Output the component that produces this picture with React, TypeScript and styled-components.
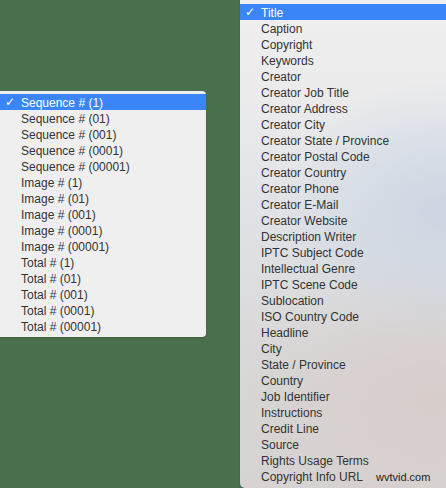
import React from 'react';
import styled, { createGlobalStyle } from 'styled-components';

const GlobalStyle = createGlobalStyle`
  html, body {
    margin: 0;
    padding: 0;
    background: #4a6f4d;
  }
  body {
    font-family: "Liberation Sans", Arial, sans-serif;
  }
`;

const Stage = styled.div`
  position: relative;
  width: 446px;
  height: 488px;
  overflow: hidden;
  display: flex;
  align-items: flex-start;
  gap: 34px;
  background: #4a6f4d;
`;

const Menu = styled.ul<{ $tall?: boolean }>`
  list-style: none;
  margin: ${(p) => (p.$tall ? '0' : '91px 0 0')};
  padding: ${(p) => (p.$tall ? '4px 0 4px' : '3px 0 3px')};
  width: 206px;
  flex-shrink: 0;
  border-radius: ${(p) => (p.$tall ? '0 0 0 5px' : '0 4px 4px 0')};
  background: ${(p) =>
    p.$tall
      ? `radial-gradient(ellipse 160px 130px at 200px 210px, rgba(200,212,226,0.85), rgba(200,212,226,0) 100%),
         radial-gradient(ellipse 200px 140px at 190px 400px, rgba(214,204,202,0.9), rgba(214,204,202,0) 100%),
         linear-gradient(180deg, #efefef 0%, #ebebec 20%, #dfe2e6 45%, #d9d7d7 75%, #d6d3d2 100%)`
      : '#efefef'};
  box-shadow: 0 1px 2px rgba(0, 0, 0, 0.15);
`;

const Item = styled.li<{ $selected?: boolean }>`
  display: flex;
  align-items: center;
  height: 16px;
  padding-left: 21px;
  position: relative;
  font-size: 12px;
  line-height: 16px;
  padding-top: 1px;
  box-sizing: border-box;
  white-space: nowrap;
  color: ${(p) => (p.$selected ? '#ffffff' : '#333333')};
  background: ${(p) => (p.$selected ? '#3a86f8' : 'transparent')};
`;

const Check = styled.span`
  position: absolute;
  left: 5px;
  top: 0;
  font-family: "DejaVu Sans", sans-serif;
  font-size: 12px;
  font-weight: bold;
  line-height: 16px;
`;

const Watermark = styled.span`
  position: absolute;
  left: 376px;
  top: 471px;
  font-family: "Liberation Sans", Arial, sans-serif;
  font-size: 11px;
  color: #1e1e1e;
`;

const numbering = [
  'Sequence # (1)',
  'Sequence # (01)',
  'Sequence # (001)',
  'Sequence # (0001)',
  'Sequence # (00001)',
  'Image # (1)',
  'Image # (01)',
  'Image # (001)',
  'Image # (0001)',
  'Image # (00001)',
  'Total # (1)',
  'Total # (01)',
  'Total # (001)',
  'Total # (0001)',
  'Total # (00001)',
];

const metadata = [
  'Title',
  'Caption',
  'Copyright',
  'Keywords',
  'Creator',
  'Creator Job Title',
  'Creator Address',
  'Creator City',
  'Creator State / Province',
  'Creator Postal Code',
  'Creator Country',
  'Creator Phone',
  'Creator E-Mail',
  'Creator Website',
  'Description Writer',
  'IPTC Subject Code',
  'Intellectual Genre',
  'IPTC Scene Code',
  'Sublocation',
  'ISO Country Code',
  'Headline',
  'City',
  'State / Province',
  'Country',
  'Job Identifier',
  'Instructions',
  'Credit Line',
  'Source',
  'Rights Usage Terms',
  'Copyright Info URL',
];

const PopupMenu: React.FC<{ items: string[]; tall?: boolean }> = ({ items, tall }) => (
  <Menu $tall={tall}>
    {items.map((label, i) => (
      <Item key={label} $selected={i === 0}>
        {i === 0 && <Check>✓</Check>}
        {label}
      </Item>
    ))}
  </Menu>
);

const App: React.FC = () => {
  return (
    <>
      <GlobalStyle />
      <Stage>
        <PopupMenu items={numbering} />
        <PopupMenu items={metadata} tall />
        <Watermark>wvtvid.com</Watermark>
      </Stage>
    </>
  );
};

export default App;
